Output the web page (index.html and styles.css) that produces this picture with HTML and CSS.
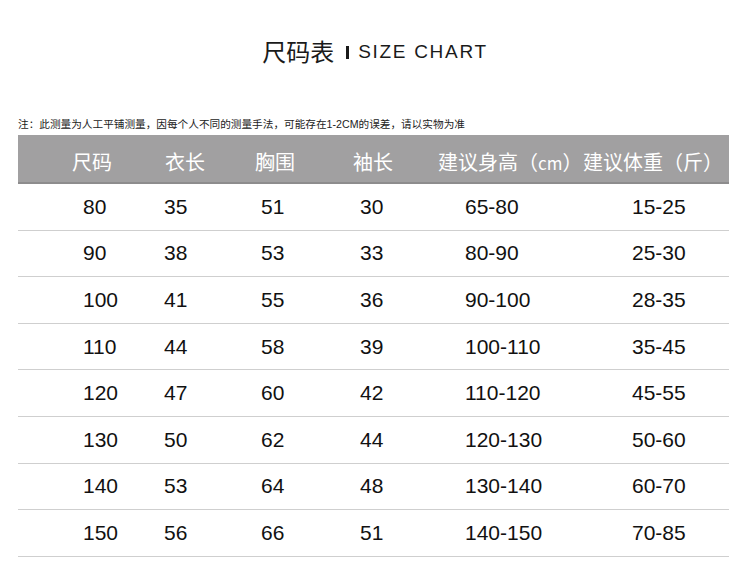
FILE: index.html
```html
<!DOCTYPE html>
<html lang="zh">
<head>
<meta charset="utf-8">
<title>尺码表 | SIZE CHART</title>
<link rel="stylesheet" href="styles.css">
</head>
<body>
<div class="page">
  <h1 class="title"><span class="title-cn">尺码表</span><span class="title-bar"></span><span class="title-en">SIZE CHART</span></h1>
  <p class="note">注：此测量为人工平铺测量，因每个人不同的测量手法，可能存在1-2CM的误差，请以实物为准</p>
  <div class="chart">
    <div class="head">
      <div class="hcell">尺码</div>
      <div class="hcell">衣长</div>
      <div class="hcell">胸围</div>
      <div class="hcell">袖长</div>
      <div class="hcell">建议身高（<span class="unit">cm</span>）</div>
      <div class="hcell">建议体重（斤）</div>
    </div>
    <div class="row"><span>80</span><span>35</span><span>51</span><span>30</span><span>65-80</span><span>15-25</span></div>
    <div class="row"><span>90</span><span>38</span><span>53</span><span>33</span><span>80-90</span><span>25-30</span></div>
    <div class="row"><span>100</span><span>41</span><span>55</span><span>36</span><span>90-100</span><span>28-35</span></div>
    <div class="row"><span>110</span><span>44</span><span>58</span><span>39</span><span>100-110</span><span>35-45</span></div>
    <div class="row"><span>120</span><span>47</span><span>60</span><span>42</span><span>110-120</span><span>45-55</span></div>
    <div class="row"><span>130</span><span>50</span><span>62</span><span>44</span><span>120-130</span><span>50-60</span></div>
    <div class="row"><span>140</span><span>53</span><span>64</span><span>48</span><span>130-140</span><span>60-70</span></div>
    <div class="row"><span>150</span><span>56</span><span>66</span><span>51</span><span>140-150</span><span>70-85</span></div>
  </div>
</div>
</body>
</html>
```
FILE: styles.css
```css
* { box-sizing: border-box; }
html, body { margin: 0; padding: 0; background: #fff; }
body { font-family: "Liberation Sans", "Noto Sans CJK SC", sans-serif; color: #111; }
.page { width: 750px; height: 569px; overflow: hidden; padding-top: 36px; }

.title {
  margin: 0;
  height: 30px;
  display: flex;
  align-items: center;
  justify-content: center;
  font-weight: normal;
  color: #1a1a1a;
}
.title-cn { font-family: "Noto Sans CJK SC", sans-serif; font-size: 24px; line-height: 30px; }
.title-bar { width: 3px; height: 13px; background: #1a1a1a; margin: 3px 9px 0 12px; }
.title-en { font-family: "Liberation Sans", sans-serif; font-size: 19px; letter-spacing: 1.7px; line-height: 30px; padding-top: 2px; }

.note {
  margin: 51px 0 0 18px;
  height: 18px;
  line-height: 14px;
  font-size: 10.65px;
  color: #222;
  font-family: "Liberation Sans", "Noto Sans CJK SC", sans-serif;
}

.chart { margin-left: 18px; width: 711px; }
.head {
  height: 49px;
  background: #a1a0a1;
  border-bottom: 2px solid #8d8c8d;
  display: grid;
  grid-template-columns: 93px 90px 98px 85px 145px 146px;
  align-items: center;
  padding-left: 54px;
  padding-top: 5px;
  color: #fff;
  font-family: "Noto Sans CJK SC", sans-serif;
  font-size: 20px;
  white-space: nowrap;
}
.unit { font-size: 17px; }

.row {
  height: 46.6px;
  border-bottom: 1px solid #cfcfcf;
  display: grid;
  grid-template-columns: 146px 97px 99px 105px 167px 97px;
  align-items: center;
  font-size: 21px;
  color: #111;
}
.row span:first-child { padding-left: 65px; }
```
